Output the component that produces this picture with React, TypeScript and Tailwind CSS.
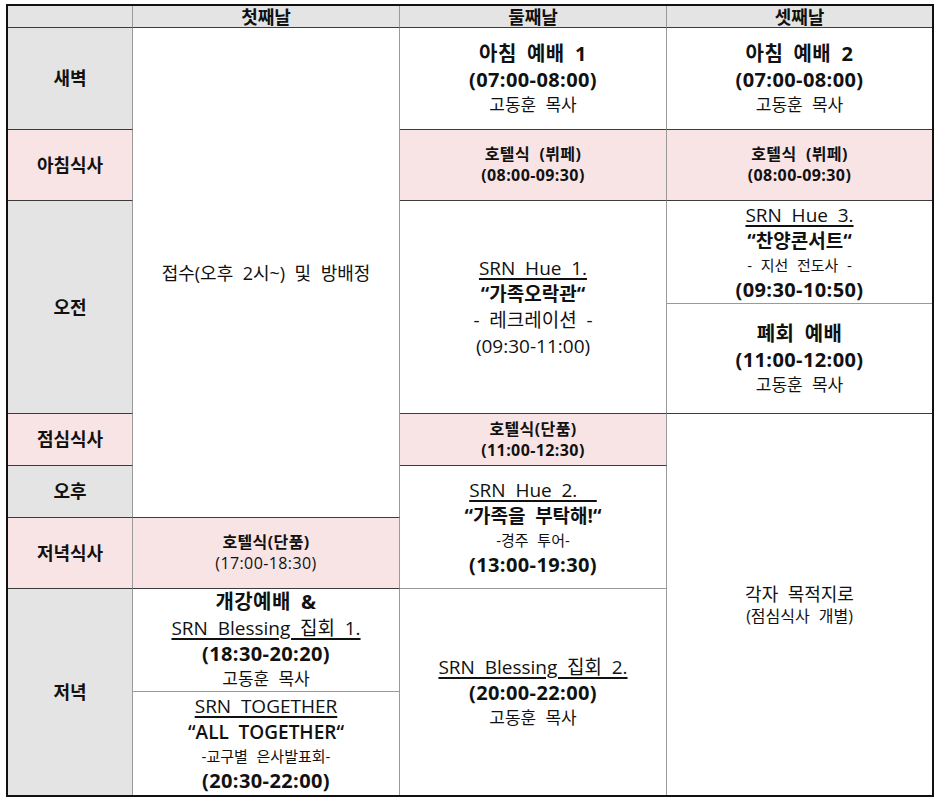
import type { ReactNode } from "react";

const GRAY = "bg-[#e4e4e4]";
const PINK = "bg-[#f9e4e5]";

function Cell({ className, children }: { className: string; children?: ReactNode }) {
  return (
    <div
      className={`flex flex-col items-center justify-center border-r border-b border-r-[#9a9a9a] text-center text-[#111] ${className}`}
    >
      {children}
    </div>
  );
}

const title = "text-[20px] font-bold leading-[26px] tracking-[0.4px]";
const plain = "text-[19px] leading-[26px]";
const speaker = "text-[17px] leading-[24px]";
const small = "text-[15px] leading-[23px]";
const meal = "text-[16px] font-bold leading-[21px] tracking-[0.4px]";
const label = "text-[18px] font-bold";

function Link({ children }: { children: ReactNode }) {
  return <span className="underline decoration-[1.5px] underline-offset-[3px]">{children}</span>;
}

export default function App() {
  return (
    <div className="min-h-screen bg-white pl-[6px] pt-[4px] font-['Open_Sans','Noto_Sans_CJK_KR',sans-serif] [word-spacing:0.3em]">
      <div className="grid w-[928px] grid-cols-[125px_267px_267px_265px] grid-rows-[22px_102px_71px_103px_110px_52px_52px_71px_103px_103px] border-2 border-[#111]">
        {/* header */}
        <Cell className={`col-start-1 row-start-1 border-b-[#3c3c3c] ${GRAY}`} />
        <Cell className={`col-start-2 row-start-1 border-b-[#3c3c3c] ${GRAY}`}>
          <span className="text-[18px] font-bold leading-[20px]">첫째날</span>
        </Cell>
        <Cell className={`col-start-3 row-start-1 border-b-[#3c3c3c] ${GRAY}`}>
          <span className="text-[18px] font-bold leading-[20px]">둘째날</span>
        </Cell>
        <Cell className={`col-start-4 row-start-1 border-r-0 border-b-[#3c3c3c] ${GRAY}`}>
          <span className="text-[18px] font-bold leading-[20px]">셋째날</span>
        </Cell>

        {/* row labels */}
        <Cell className={`col-start-1 row-start-2 border-b-[#3c3c3c] ${GRAY}`}>
          <span className={label}>새벽</span>
        </Cell>
        <Cell className={`col-start-1 row-start-3 border-b-[#3c3c3c] ${PINK}`}>
          <span className={label}>아침식사</span>
        </Cell>
        <Cell className={`col-start-1 row-start-4 row-span-2 border-b-[#3c3c3c] ${GRAY}`}>
          <span className={label}>오전</span>
        </Cell>
        <Cell className={`col-start-1 row-start-6 border-b-[#3c3c3c] ${PINK}`}>
          <span className={label}>점심식사</span>
        </Cell>
        <Cell className={`col-start-1 row-start-7 border-b-[#3c3c3c] ${GRAY}`}>
          <span className={label}>오후</span>
        </Cell>
        <Cell className={`col-start-1 row-start-8 border-b-[#3c3c3c] ${PINK}`}>
          <span className={label}>저녁식사</span>
        </Cell>
        <Cell className={`col-start-1 row-start-9 row-span-2 border-b-0 ${GRAY}`}>
          <span className={label}>저녁</span>
        </Cell>

        {/* 첫째날 */}
        <Cell className="col-start-2 row-start-2 row-span-6 border-b-[#3c3c3c] bg-white">
          <span className="text-[18px] leading-[24px]">접수(오후 2시~) 및 방배정</span>
        </Cell>
        <Cell className={`col-start-2 row-start-8 border-b-[#3c3c3c] ${PINK}`}>
          <span className={meal}>호텔식(단품)</span>
          <span className="text-[16px] leading-[21px] tracking-[0.4px]">(17:00-18:30)</span>
        </Cell>
        <Cell className="col-start-2 row-start-9 border-b-[#9a9a9a] bg-white">
          <span className={title}>개강예배 &amp;</span>
          <span className={plain}>
            <Link>SRN Blessing 집회 1.</Link>
          </span>
          <span className={title}>(18:30-20:20)</span>
          <span className={speaker}>고동훈 목사</span>
        </Cell>
        <Cell className="col-start-2 row-start-10 border-b-0 bg-white">
          <span className={plain}>
            <Link>SRN TOGETHER</Link>
          </span>
          <span className={`${plain} font-semibold`}>“ALL TOGETHER“</span>
          <span className={small}>-교구별 은사발표회-</span>
          <span className={title}>(20:30-22:00)</span>
        </Cell>

        {/* 둘째날 */}
        <Cell className="col-start-3 row-start-2 border-b-[#3c3c3c] bg-white">
          <span className={title}>아침 예배 1</span>
          <span className={title}>(07:00-08:00)</span>
          <span className={speaker}>고동훈 목사</span>
        </Cell>
        <Cell className={`col-start-3 row-start-3 border-b-[#3c3c3c] ${PINK}`}>
          <span className={meal}>호텔식 (뷔페)</span>
          <span className={meal}>(08:00-09:30)</span>
        </Cell>
        <Cell className="col-start-3 row-start-4 row-span-2 border-b-[#3c3c3c] bg-white">
          <span className={plain}>
            <Link>SRN Hue 1.</Link>
          </span>
          <span className={`${plain} font-bold`}>“가족오락관“</span>
          <span className={plain}>- 레크레이션 -</span>
          <span className={plain}>(09:30-11:00)</span>
        </Cell>
        <Cell className={`col-start-3 row-start-6 border-b-[#3c3c3c] ${PINK}`}>
          <span className={meal}>호텔식(단품)</span>
          <span className={meal}>(11:00-12:30)</span>
        </Cell>
        <Cell className="col-start-3 row-start-7 row-span-2 border-b-[#9a9a9a] bg-white">
          <span className={plain}>
            <Link>SRN Hue 2.&nbsp;&nbsp;</Link>
          </span>
          <span className={`${plain} font-bold`}>“가족을 부탁해!“</span>
          <span className={small}>-경주 투어-</span>
          <span className={title}>(13:00-19:30)</span>
        </Cell>
        <Cell className="col-start-3 row-start-9 row-span-2 border-b-0 bg-white">
          <span className={plain}>
            <Link>SRN Blessing 집회 2.</Link>
          </span>
          <span className={title}>(20:00-22:00)</span>
          <span className={speaker}>고동훈 목사</span>
        </Cell>

        {/* 셋째날 */}
        <Cell className="col-start-4 row-start-2 border-r-0 border-b-[#3c3c3c] bg-white">
          <span className={title}>아침 예배 2</span>
          <span className={title}>(07:00-08:00)</span>
          <span className={speaker}>고동훈 목사</span>
        </Cell>
        <Cell className={`col-start-4 row-start-3 border-r-0 border-b-[#3c3c3c] ${PINK}`}>
          <span className={meal}>호텔식 (뷔페)</span>
          <span className={meal}>(08:00-09:30)</span>
        </Cell>
        <Cell className="col-start-4 row-start-4 border-r-0 border-b-[#9a9a9a] bg-white">
          <span className={plain}>
            <Link>SRN Hue 3.</Link>
          </span>
          <span className={`${plain} font-bold`}>“찬양콘서트“</span>
          <span className={small}>- 지선 전도사 -</span>
          <span className={title}>(09:30-10:50)</span>
        </Cell>
        <Cell className="col-start-4 row-start-5 border-r-0 border-b-[#3c3c3c] bg-white">
          <span className={title}>폐회 예배</span>
          <span className={title}>(11:00-12:00)</span>
          <span className={speaker}>고동훈 목사</span>
        </Cell>
        <Cell className="col-start-4 row-start-6 row-span-5 border-r-0 border-b-0 bg-white">
          <span className="text-[18px] leading-[24px]">각자 목적지로</span>
          <span className="text-[16px] leading-[21px]">(점심식사 개별)</span>
        </Cell>
      </div>
    </div>
  );
}
